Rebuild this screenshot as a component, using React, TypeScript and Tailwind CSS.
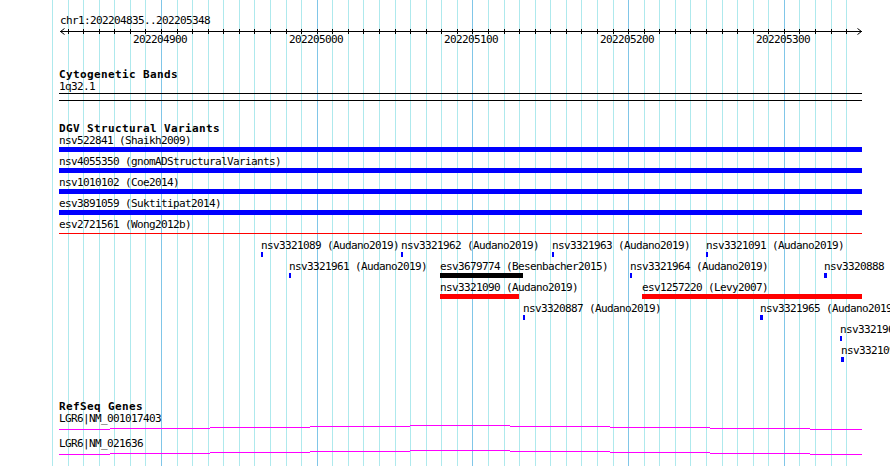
import React from "react";

const gridXs = Array.from({ length: 52 }, (_, i) => Math.round(52 + 15.57 * i));
const majors = [7, 17, 27, 37, 47];
const majorLabels = ["202204900", "202205000", "202205100", "202205200", "202205300"];

type Feat = { x: number; w: number; label: string; color: string; thin?: boolean };

const BLUE = "#0000ff";
const RED = "#ff0000";
const BLACK = "#000000";

const rows: Feat[][] = [
  [{ x: 59, w: 803, label: "nsv522841 (Shaikh2009)", color: BLUE }],
  [{ x: 59, w: 803, label: "nsv4055350 (gnomADStructuralVariants)", color: BLUE }],
  [{ x: 59, w: 803, label: "nsv1010102 (Coe2014)", color: BLUE }],
  [{ x: 59, w: 803, label: "esv3891059 (Suktitipat2014)", color: BLUE }],
  [{ x: 59, w: 803, label: "esv2721561 (Wong2012b)", color: RED, thin: true }],
  [
    { x: 261, w: 2, label: "nsv3321089 (Audano2019)", color: BLUE },
    { x: 401, w: 2, label: "nsv3321962 (Audano2019)", color: BLUE },
    { x: 552, w: 2, label: "nsv3321963 (Audano2019)", color: BLUE },
    { x: 706, w: 2, label: "nsv3321091 (Audano2019)", color: BLUE },
  ],
  [
    { x: 289, w: 2, label: "nsv3321961 (Audano2019)", color: BLUE },
    { x: 440, w: 83, label: "esv3679774 (Besenbacher2015)", color: BLACK },
    { x: 630, w: 2, label: "nsv3321964 (Audano2019)", color: BLUE },
    { x: 824, w: 3, label: "nsv3320888 (Audano2019)", color: BLUE },
  ],
  [
    { x: 440, w: 79, label: "nsv3321090 (Audano2019)", color: RED },
    { x: 642, w: 220, label: "esv1257220 (Levy2007)", color: RED },
  ],
  [
    { x: 523, w: 2, label: "nsv3320887 (Audano2019)", color: BLUE },
    { x: 760, w: 3, label: "nsv3321965 (Audano2019)", color: BLUE },
  ],
  [{ x: 840, w: 2, label: "nsv3321966 (Audano2019)", color: BLUE }],
  [{ x: 841, w: 3, label: "nsv3321095 (Audano2019)", color: BLUE }],
];

const geneSegs: [number, number, number][] = [
  [59, 110, 4],
  [110, 210, 3],
  [210, 310, 2],
  [310, 410, 1],
  [410, 510, 0],
  [510, 610, 1],
  [610, 710, 2],
  [710, 810, 3],
  [810, 862, 4],
];

function Grid() {
  return (
    <svg className="absolute left-0 top-0" width={890} height={466} shapeRendering="crispEdges">
      {gridXs.map((x, i) => (
        <rect
          key={i}
          x={x}
          y={0}
          width={1}
          height={466}
          fill={majors.includes(i) ? "#80c6e8" : "#aee9ed"}
        />
      ))}
    </svg>
  );
}

function Ruler() {
  return (
    <div className="h-[68px]">
      <div className="h-[27px] pt-[15px] pl-[60px] leading-[12px] whitespace-nowrap">
        chr1:202204835..202205348
      </div>
      <svg className="block" width={890} height={8}>
        <g shapeRendering="crispEdges">
          <rect x={60} y={4} width={802} height={1} fill="#000" />
          {gridXs.slice(1).map((x, i) => (
            <rect key={i} x={x} y={2} width={1} height={5} fill="#000" />
          ))}
        </g>
        <polyline points="64.5,1.5 60.5,4.5 64.5,7.5" fill="none" stroke="#000" strokeWidth={1} />
        <polyline points="857.5,1.5 861.5,4.5 857.5,7.5" fill="none" stroke="#000" strokeWidth={1} />
      </svg>
      <div className="relative -mt-px h-[12px] leading-[12px]">
        {majors.map((m, k) => (
          <span key={m} className="absolute top-0 whitespace-nowrap" style={{ left: gridXs[m] - 28 }}>
            {majorLabels[k]}
          </span>
        ))}
      </div>
    </div>
  );
}

function TrackTitle({ children, className = "" }: { children: React.ReactNode; className?: string }) {
  return (
    <div className={`pl-[59px] h-[13px] leading-[13px] font-bold tracking-[0.378px] whitespace-nowrap ${className}`}>
      {children}
    </div>
  );
}

function FeatureRow({ feats }: { feats: Feat[] }) {
  return (
    <div className="relative h-[21px]">
      {feats.map((f) => (
        <div key={f.label} className="absolute top-0" style={{ left: f.x }}>
          <div className="h-[12px] leading-[12px] whitespace-nowrap">{f.label}</div>
          {f.thin ? (
            <div className="mt-[2px] h-px" style={{ width: f.w, backgroundColor: f.color }} />
          ) : (
            <div className="h-[5px]" style={{ width: f.w, backgroundColor: f.color }} />
          )}
        </div>
      ))}
    </div>
  );
}

function GeneRow({ label }: { label: string }) {
  return (
    <div className="h-[25px]">
      <div className="pl-[59px] h-[12px] leading-[12px] whitespace-nowrap">{label}</div>
      <svg className="block" width={890} height={13} shapeRendering="crispEdges">
        {geneSegs.map(([a, b, y], i) => (
          <rect key={i} x={a} y={y} width={b - a} height={1} fill="#ff00ff" />
        ))}
      </svg>
    </div>
  );
}

export default function App() {
  return (
    <div className="relative w-[890px] h-[466px] overflow-hidden bg-white text-black text-[11px] tracking-[-0.622px] font-['DejaVu_Sans_Mono','Liberation_Mono',monospace]">
      <Grid />
      <div className="relative">
        <Ruler />
        <TrackTitle>Cytogenetic Bands</TrackTitle>
        <div className="pl-[59px] h-[12px] leading-[12px]">1q32.1</div>
        <div className="ml-[59px] w-[803px] h-[8px] border-y border-black" />
        <TrackTitle className="mt-[21px]">DGV Structural Variants</TrackTitle>
        {rows.map((r, i) => (
          <FeatureRow key={i} feats={r} />
        ))}
        <TrackTitle className="mt-[34px]">RefSeq Genes</TrackTitle>
        <GeneRow label="LGR6|NM_001017403" />
        <GeneRow label="LGR6|NM_021636" />
      </div>
    </div>
  );
}
